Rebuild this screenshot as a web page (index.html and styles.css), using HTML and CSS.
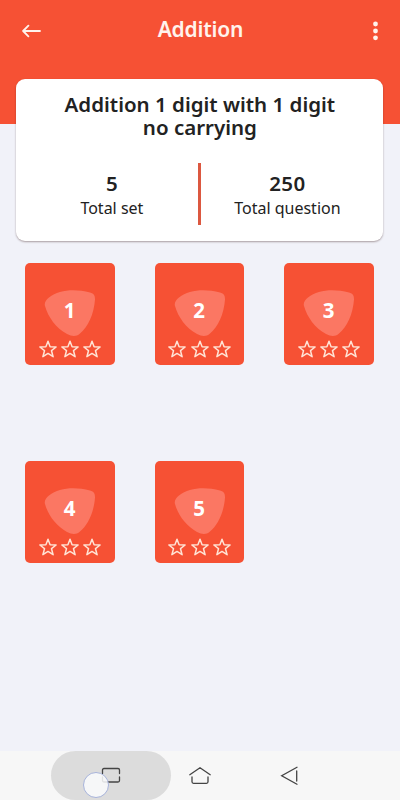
FILE: index.html
```html
<!DOCTYPE html>
<html lang="en">
<head>
<meta charset="utf-8">
<title>Addition</title>
<link rel="stylesheet" href="styles.css">
</head>
<body>
<svg class="defs" width="0" height="0">
  <symbol id="badge" viewBox="0 0 52 48"><path d="M1 17C0 14 2 11 5 8.500C15 .5 31 -.5 46 3.500C50 4.500 51 6.500 51 10.500C50 25 44 38 36 44.500C32 48 28 47.500 23 45C12 39 4 28 1 17Z"/></symbol>
  <symbol id="star" viewBox="0 0 18 18"><path d="M9 1.300L11.100 6.700L17.100 7L12.500 10.700L14.100 16.700L9 13.400L3.900 16.700L5.500 10.700L.9 7L6.900 6.700Z"/></symbol>
</svg>
<div class="screen">
  <header class="bar">
    <svg class="back" width="20" height="14" viewBox="0 0 20 14"><path d="M18 7H1.200M6.400 1.700L1.100 7L6.400 12.300"/></svg>
    <h1 class="title">Addition</h1>
    <svg class="more" width="6" height="20" viewBox="0 0 6 20"><circle cx="3.500" cy="3" r="2.400"/><circle cx="3.500" cy="10" r="2.400"/><circle cx="3.500" cy="16.800" r="2.400"/></svg>
  </header>
  <section class="card">
    <h2 class="headline">Addition 1 digit with 1 digit<br>no carrying</h2>
    <div class="stats">
      <div class="stat"><b>5</b><span class="label">Total set</span></div>
      <i class="rule"></i>
      <div class="stat"><b class="num">250</b><span class="label">Total question</span></div>
    </div>
  </section>
  <main class="grid">
    <div class="tile"><div class="badge"><svg><use href="#badge"/></svg><b>1</b></div><div class="stars"><svg><use href="#star"/></svg><svg><use href="#star"/></svg><svg><use href="#star"/></svg></div></div>
    <div class="tile"><div class="badge"><svg><use href="#badge"/></svg><b>2</b></div><div class="stars"><svg><use href="#star"/></svg><svg><use href="#star"/></svg><svg><use href="#star"/></svg></div></div>
    <div class="tile"><div class="badge"><svg><use href="#badge"/></svg><b>3</b></div><div class="stars"><svg><use href="#star"/></svg><svg><use href="#star"/></svg><svg><use href="#star"/></svg></div></div>
    <div class="tile"><div class="badge"><svg><use href="#badge"/></svg><b>4</b></div><div class="stars"><svg><use href="#star"/></svg><svg><use href="#star"/></svg><svg><use href="#star"/></svg></div></div>
    <div class="tile"><div class="badge"><svg><use href="#badge"/></svg><b>5</b></div><div class="stars"><svg><use href="#star"/></svg><svg><use href="#star"/></svg><svg><use href="#star"/></svg></div></div>
  </main>
  <nav class="nav">
    <div class="pill">
      <svg width="20" height="17" viewBox="0 0 20 17"><path d="M1.500 6.500V3Q1.500 1.500 3 1.500H17Q18.500 1.500 18.500 3V6.500M1.500 10V13.500Q1.500 15 3 15H17Q18.500 15 18.500 13.500V10"/></svg>
      <i class="touch"></i>
    </div>
    <svg class="home" width="24" height="19" viewBox="0 0 24 19"><path d="M1.800 8.700L12 1.700L22.200 8.700M4 11V15.800Q4 17.300 5.500 17.300H18.500Q20 17.300 20 15.800V11"/></svg>
    <svg class="prev" width="19" height="20" viewBox="0 0 19 20"><path d="M17 1.300L1.700 9.700L17 18.300M16.700 5V15"/></svg>
  </nav>
</div>
</body>
</html>
```
FILE: styles.css
```css
* { box-sizing: border-box; margin: 0; padding: 0; }
body { width: 400px; height: 800px; overflow: hidden; font-family: "Noto Sans", "Open Sans", sans-serif; color: #222; }
svg { display: block; flex: none; }
.defs { position: absolute; }
.screen { display: flex; flex-direction: column; height: 800px; background: #f1f2f9; }
.bar { height: 124px; flex: none; padding: 0 21.5px; background: #f65134; display: flex; justify-content: space-between; align-items: flex-start; color: #fff3ec; }
.back { margin-top: 24px; fill: none; stroke: #fff3ec; stroke-width: 1.8; stroke-linecap: round; stroke-linejoin: round; }
.title { font-size: 21px; line-height: 30px; font-weight: 600; letter-spacing: -.2px; margin: 14px 0 0 -13px; }
.more { margin: 21px 0 0; fill: #fff3ec; overflow: visible; }
.card { position: relative; width: 367px; height: 162px; flex: none; margin: -45px 0 0 16.4px; padding-top: 14px; border-radius: 9px; background: #fff; box-shadow: 0 1px 2px rgba(60, 30, 30, .4); text-align: center; }
.headline { font-size: 20.5px; line-height: 23px; font-weight: 600; white-space: nowrap; }
.stats { display: grid; grid-template-columns: 1fr 3px 1fr; margin-top: 24px; }
.rule { height: 62px; background: #dc5840; }
.stat { display: flex; flex-direction: column; align-items: center; padding: 8px 10px 0 0; }
.stat:first-child { padding: 8px 0 0 9px; }
.stat b { font-size: 20.5px; line-height: 24px; font-weight: 600; }
.stat .num { letter-spacing: .4px; }
.label { font-size: 16px; line-height: 27px; white-space: nowrap; }
.grid { display: grid; grid-template-columns: repeat(3, 89.5px); gap: 96px 40px; margin: 22.4px 0 0 25.4px; }
.tile { height: 102px; border-radius: 5px; background: #f65134; display: flex; flex-direction: column; align-items: center; padding-top: 26px; }
.badge { display: grid; place-items: center; width: 52px; height: 48px; }
.badge > * { grid-area: 1 / 1; }
.badge svg { width: 52px; height: 48px; fill: #fb7763; }
.badge b { font-size: 20.5px; line-height: 24px; font-weight: 700; color: #fff; margin: -6px 1px 0 0; }
.stars { display: flex; gap: 4.3px; margin: 2.5px 0 0; }
.stars svg { width: 18px; height: 18px; overflow: visible; fill: none; stroke: #ffe3d5; stroke-width: 1.5; stroke-linejoin: round; }
.nav { margin-top: auto; height: 49px; background: #f7f7f7; display: flex; align-items: flex-start; padding-left: 51px; }
.nav svg { fill: none; stroke: #444; stroke-width: 1.3; stroke-linecap: round; }
.pill { position: relative; width: 120px; height: 49px; border-radius: 25px; background: #dcdcdc; padding: 16px 0 0 50px; }
.touch { position: absolute; left: 32px; top: 21px; width: 26px; height: 26px; border-radius: 50%; background: rgba(250, 251, 253, .86); border: 1.5px solid #a7b3da; }
.home { margin: 15px 0 0 17px; }
.prev { margin: 14.5px 0 0 68px; }
```
